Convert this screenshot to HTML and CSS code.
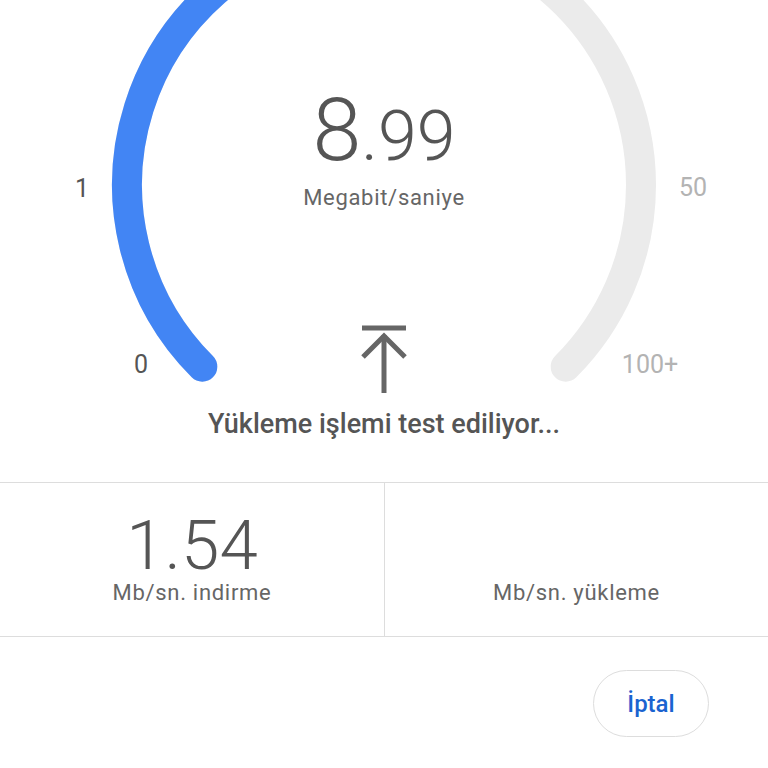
FILE: index.html
```html
<!DOCTYPE html>
<html lang="tr">
<head>
    <meta charset="UTF-8">
    <meta name="viewport" content="width=device-width, initial-scale=1.0">
    <title>Hız testi</title>
    <link rel="stylesheet" href="styles.css">
</head>
<body>
    <div class="gauge">
        <svg class="gauge-dial" width="768" height="482" viewBox="0 0 768 482">
            <path d="M 202.3 366.7 A 257 257 0 1 1 565.7 366.7" fill="none" stroke="#ebebeb" stroke-width="30" stroke-linecap="round"/>
            <path d="M 202.3 366.7 A 257 257 0 0 1 339.4 -68.1" fill="none" stroke="#4285f4" stroke-width="30" stroke-linecap="round"/>
            <text class="tick" x="82" y="188">1</text>
            <text class="tick" x="141" y="364">0</text>
            <text class="tick tick-light" x="693" y="187">50</text>
            <text class="tick tick-light" x="650" y="364">100+</text>
        </svg>
        <div class="reading">8<span class="decimals">.99</span></div>
        <div class="unit">Megabit/saniye</div>
        <svg class="arrow" width="46" height="68" viewBox="0 0 46 68">
            <line x1="1" y1="3" x2="45" y2="3" stroke="#666" stroke-width="5"/>
            <line x1="23" y1="10" x2="23" y2="68" stroke="#666" stroke-width="5"/>
            <polyline points="2,32 23,11 44,32" fill="none" stroke="#666" stroke-width="5"/>
        </svg>
        <div class="status">Yükleme işlemi test ediliyor...</div>
    </div>

    <div class="stats">
        <div class="stat">
            <div class="stat-value">1.54</div>
            <div class="stat-label">Mb/sn. indirme</div>
        </div>
        <div class="stat">
            <div class="stat-label">Mb/sn. yükleme</div>
        </div>
    </div>

    <div class="actions">
        <button class="cancel">İptal</button>
    </div>
</body>
</html>
```

FILE: styles.css
```css
body {
    font-family: Roboto, "Liberation Sans", sans-serif;
    background-color: #fff;
    color: #555;
    margin: 0;
    padding: 0;
    width: 768px;
    overflow: hidden;
}

.gauge {
    position: relative;
    height: 482px;
    display: flex;
    flex-direction: column;
    align-items: center;
    padding-top: 86px;
    box-sizing: border-box;
}

.gauge-dial {
    position: absolute;
    top: 0;
    left: 0;
}

.tick {
    font-family: Roboto, sans-serif;
    font-size: 25px;
    fill: #555;
    text-anchor: middle;
    dominant-baseline: central;
}

.tick-light {
    fill: #b3b3b3;
}

.reading {
    position: relative;
    font-size: 88px;
    font-weight: 300;
    line-height: 88px;
    color: #555;
}

.decimals {
    font-size: 70px;
}

.unit {
    position: relative;
    font-size: 22px;
    letter-spacing: 0.7px;
    line-height: 24px;
    color: #666;
    margin-top: 6px;
}

.arrow {
    position: relative;
    margin-top: 115px;
}

.status {
    position: relative;
    font-size: 27px;
    line-height: 30px;
    font-weight: 500;
    color: #555;
    margin-top: 16px;
}

.stats {
    display: grid;
    grid-template-columns: 1fr 1fr;
    border-top: 1px solid #ddd;
    border-bottom: 1px solid #ddd;
    height: 155px;
    box-sizing: border-box;
}

.stat {
    display: flex;
    flex-direction: column;
    align-items: center;
    justify-content: flex-end;
    padding-bottom: 30px;
}

.stat + .stat {
    border-left: 1px solid #ddd;
}

.stat-value {
    font-size: 69px;
    font-weight: 300;
    line-height: 69px;
    color: #555;
}

.stat-label {
    font-size: 22px;
    letter-spacing: 0.7px;
    line-height: 26px;
    color: #666;
}

.actions {
    display: flex;
    justify-content: flex-end;
    padding: 33px 59px 0 0;
}

.cancel {
    font-family: Roboto, sans-serif;
    font-size: 24px;
    font-weight: 500;
    color: #1a63d0;
    background: #fff;
    border: 1px solid #ddd;
    border-radius: 34px;
    width: 116px;
    height: 67px;
    padding: 0;
}
```
